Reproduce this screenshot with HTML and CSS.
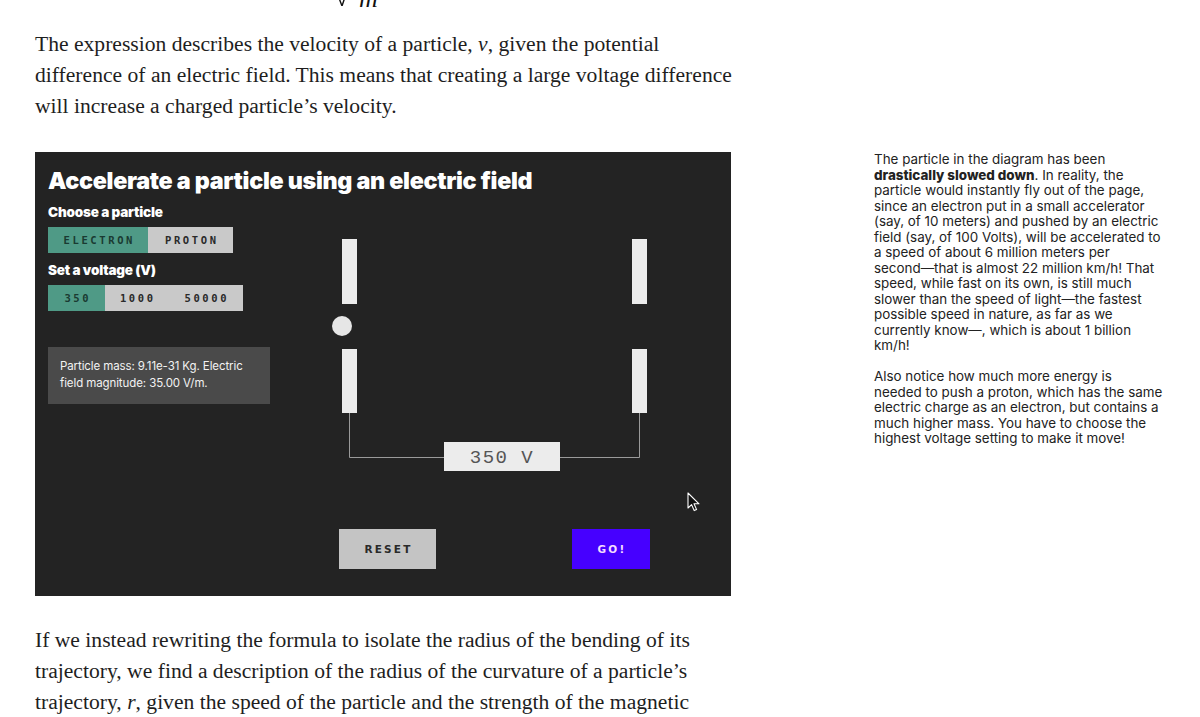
FILE: index.html
```html
<!DOCTYPE html>
<html lang="en">
<head>
<meta charset="utf-8">
<title>Accelerate a particle</title>
<link rel="stylesheet" href="styles.css">
</head>
<body>
<main class="page">
  <div class="formula">
    <svg class="radical" width="12" height="8" viewBox="0 0 12 8"><path d="M2 0 L5 8 L9 -4" fill="none" stroke="#111" stroke-width="1.4"/></svg>
    <span class="frac-m">m</span>
  </div>

  <p class="body-text">The expression describes the velocity of a particle, <i>v</i>, given the potential difference of an electric field. This means that creating a large voltage difference will increase a charged particle’s velocity.</p>

  <section class="figure-row">
    <div class="panel">
      <h2 class="panel-title">Accelerate a particle using an electric field</h2>
      <div class="panel-body">
        <div class="controls">
          <div class="ctrl-label">Choose a particle</div>
          <div class="seg">
            <button class="seg-btn active w-electron">ELECTRON</button>
            <button class="seg-btn w-proton">PROTON</button>
          </div>
          <div class="ctrl-label second">Set a voltage (V)</div>
          <div class="seg">
            <button class="seg-btn active w-350">350</button>
            <button class="seg-btn w-1000">1000</button>
            <button class="seg-btn w-50000">50000</button>
          </div>
          <div class="info">Particle mass: 9.11e-31 Kg. Electric field magnitude: 35.00 V/m.</div>
        </div>
        <div class="stage">
          <svg class="diagram" width="330" height="250" viewBox="0 0 330 250">
            <path d="M19.5 183 V227.5 H309.5 V183" fill="none" stroke="#9a9a9a" stroke-width="1"/>
            <rect x="12" y="9" width="15" height="65" fill="#ececec"/>
            <rect x="12" y="119" width="15" height="64" fill="#ececec"/>
            <rect x="302" y="9" width="15" height="65" fill="#ececec"/>
            <rect x="302" y="119" width="15" height="64" fill="#ececec"/>
            <circle cx="12" cy="96" r="10" fill="#e6e6e6"/>
            <rect x="114" y="212" width="116" height="29" fill="#ececec"/>
            <text x="172" y="233" text-anchor="middle" class="volt-text">350 V</text>
          </svg>
          <div class="actions">
            <button class="act reset">RESET</button>
            <button class="act go">GO!</button>
          </div>
        </div>
      </div>
      <svg class="cursor" width="14" height="20" viewBox="0 0 14 20"><path d="M1 1 V16 L4.6 12.6 L7.2 18.6 L9.6 17.6 L7 11.8 H12 Z" fill="#111" stroke="#fff" stroke-width="1.1" stroke-linejoin="round"/></svg>
    </div>

    <aside class="note">
      <p>The particle in the diagram has been <b>drastically slowed down</b>. In reality, the particle would instantly fly out of the page, since an electron put in a small accelerator (say, of 10 meters) and pushed by an electric field (say, of 100 Volts), will be accelerated to a speed of about 6 million meters per <span class="nw">second—that</span> is almost 22 million km/h! That speed, while fast on its own, is still much slower than the speed of <span class="nw">light—the</span> fastest possible speed in nature, as far as we currently <span class="nw">know—,</span> which is about 1 billion km/h!</p>
      <p>Also notice how much more energy is <span class="nw">needed to</span> push a proton, which has the same electric charge as an electron, but contains a much higher mass. You have to choose the highest voltage setting to make it move!</p>
    </aside>
  </section>

  <p class="body-text after">If we instead rewriting the formula to isolate the radius of the bending of its trajectory, we find a description of the radius of the curvature of a particle’s trajectory, <i>r</i>, given the speed of the particle and the strength of the magnetic field.</p>
</main>
</body>
</html>
```

FILE: styles.css
```css
html, body {
  margin: 0;
  padding: 0;
  background: #ffffff;
}

.page {
  padding-left: 35px;
  height: 717px;
  overflow: hidden;
}

.formula {
  height: 8px;
  overflow: hidden;
  display: flex;
  align-items: flex-end;
  padding-left: 302px;
}

.radical {
  display: block;
  margin-top: -2px;
  align-self: flex-start;
}

.frac-m {
  display: block;
  margin-left: 10px;
  font-family: "Liberation Serif", serif;
  font-style: italic;
  font-size: 26px;
  line-height: 16px;
  margin-top: -9px;
  align-self: flex-start;
  color: #111;
}

.body-text {
  width: 700px;
  margin: 21px 0 0 0;
  font-family: "Liberation Serif", "DejaVu Serif", serif;
  font-size: 21.6px;
  line-height: 31px;
  color: #1e1e1e;
}

.body-text.after {
  margin-top: 29px;
}

.figure-row {
  display: flex;
  align-items: flex-start;
  gap: 143px;
  margin-top: 30px;
}

.panel {
  position: relative;
  flex: none;
  width: 696px;
  height: 444px;
  box-sizing: border-box;
  background: #232323;
  padding: 14px 13px 0 13px;
  display: flex;
  flex-direction: column;
}

.panel-title {
  margin: 0;
  font-family: Inter, "Liberation Sans", sans-serif;
  font-weight: 900;
  font-size: 23.3px;
  line-height: 30px;
  letter-spacing: -0.3px;
  color: #ffffff;
  white-space: nowrap;
}

.panel-body {
  display: flex;
}

.controls {
  flex: none;
  width: 222px;
  display: flex;
  flex-direction: column;
  align-items: flex-start;
}

.ctrl-label {
  margin-top: 7px;
  font-family: Inter, "Liberation Sans", sans-serif;
  font-weight: 900;
  font-size: 13.5px;
  line-height: 18px;
  letter-spacing: -0.2px;
  color: #ffffff;
}

.ctrl-label.second {
  margin-top: 8px;
}

.seg {
  display: flex;
  margin-top: 6px;
}

.seg-btn {
  height: 26px;
  border: 0;
  margin: 0;
  padding: 0;
  background: #c9c9c9;
  color: #2a2a2a;
  font-family: "DejaVu Sans Mono", "Liberation Mono", monospace;
  font-weight: bold;
  font-size: 10.5px;
  letter-spacing: 2.6px;
  text-indent: 2.6px;
}

.seg-btn.active {
  background: #4f9a86;
  color: #1a3a32;
}

.w-electron { width: 100px; }
.w-proton { width: 85px; }
.w-350 { width: 57px; }
.w-1000 { width: 63px; }
.w-50000 { width: 75px; }

.info {
  margin-top: 36px;
  box-sizing: border-box;
  width: 222px;
  height: 57px;
  padding: 11px 12px;
  background: #4a4a4a;
  font-family: Inter, "Liberation Sans", sans-serif;
  font-size: 11.5px;
  line-height: 17px;
  letter-spacing: -0.1px;
  color: #f2f2f2;
}

.stage {
  margin-left: 60px;
  margin-top: 34px;
  display: flex;
  flex-direction: column;
}

.diagram {
  display: block;
}

.volt-text {
  font-family: "Liberation Mono", "Courier New", monospace;
  font-size: 19px;
  letter-spacing: 1.5px;
  fill: #555555;
}

.actions {
  display: flex;
  gap: 136px;
  margin-top: 49px;
  padding-left: 9px;
}

.act {
  height: 40px;
  border: 0;
  margin: 0;
  padding: 0;
  font-family: "DejaVu Sans", "Liberation Sans", sans-serif;
  font-weight: bold;
  font-size: 10.5px;
  letter-spacing: 2.2px;
  text-indent: 2px;
}

.act.reset {
  width: 97px;
  background: #c4c4c4;
  color: #2a2a2a;
}

.act.go {
  width: 78px;
  background: #4600ff;
  color: #f3dcff;
}

.cursor {
  position: absolute;
  left: 652px;
  top: 340px;
}

.note {
  flex: none;
  width: 292px;
  margin-top: 0;
  font-family: Inter, "Liberation Sans", Arial, sans-serif;
  font-size: 13.4px;
  line-height: 15.5px;
  letter-spacing: 0;
  color: #222222;
}

.note p {
  margin: 0 0 15.5px 0;
}

.note b {
  font-weight: 800;
}

.nw {
  white-space: nowrap;
}
```
